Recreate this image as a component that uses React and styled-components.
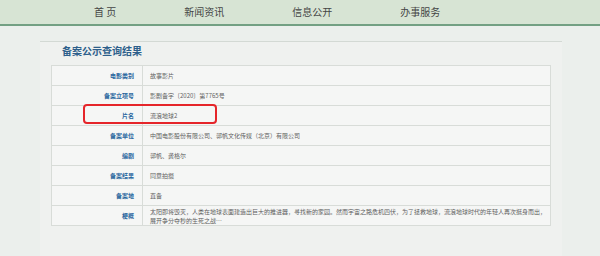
import styled, { createGlobalStyle } from "styled-components";

const GlobalStyle = createGlobalStyle`
    html, body {
        margin: 0;
        padding: 0;
        background: #eaeeeb;
        font-family: "Noto Sans CJK SC", "Noto Sans", sans-serif;
    }
`

const rows = [
    { label: "电影类别", value: "故事影片" },
    { label: "备案立项号", value: "影剧备字〔2020〕第7765号" },
    { label: "片名", value: "流浪地球2", marked: true },
    { label: "备案单位", value: "中国电影股份有限公司、郭帆文化传媒（北京）有限公司" },
    { label: "编剧", value: "郭帆、龚格尔" },
    { label: "备案结果", value: "同意拍摄" },
    { label: "备案地", value: "直备" },
    {
        label: "梗概",
        value: "太阳即将毁灭，人类在地球表面建造出巨大的推进器，寻找新的家园。然而宇宙之路危机四伏，为了拯救地球，流浪地球时代的年轻人再次挺身而出，展开争分夺秒的生死之战…",
        tall: true,
    },
];

const navItems = ["首 页", "新闻资讯", "信息公开", "办事服务"];

const App = () => {
    return (
        <Page>
            <GlobalStyle />
            <Nav>
                {navItems.map((item) => (
                    <NavItem key={item}>{item}</NavItem>
                ))}
            </Nav>
            <Main>
                <Panel>
                    <Title>备案公示查询结果</Title>
                    <Table>
                        {rows.map((row) => (
                            <Row key={row.label}>
                                <Label>{row.label}</Label>
                                <Value $tall={row.tall}>{row.value}</Value>
                                {row.marked && <Marker />}
                            </Row>
                        ))}
                    </Table>
                </Panel>
            </Main>
        </Page>
    );
}

export default App;

const Page = styled.div`
    width: 600px;
    height: 256px;
    overflow: hidden;
    background: #ebefec;
`

const Nav = styled.nav`
    height: 24px;
    display: flex;
    align-items: center;
    gap: 68px;
    padding-left: 94px;
    background: #d7e4d4;
    border-bottom: 2px solid #73a083;
`

const NavItem = styled.div`
    font-size: 10px;
    line-height: 24px;
    color: #444;
    white-space: pre;
`

const Main = styled.div`
    padding-top: 15px;
`

const Panel = styled.div`
    margin: 0 38px 0 40px;
    border-top: 1px solid #d3d9d4;
    background: #eff1ef;
    padding-bottom: 40px;
`

const Title = styled.div`
    padding: 3px 0 0 22px;
    font-size: 10px;
    line-height: 12px;
    font-weight: 700;
    color: #2d5f8b;
`

const Table = styled.div`
    margin: 8px 0 0 11px;
    width: 498px;
    border: 1px solid #d8dcd8;
    background: #f5f6f5;
`

const Row = styled.div`
    position: relative;
    display: grid;
    grid-template-columns: 91px 1fr;
    min-height: 19px;
    border-top: 1px solid #d8dcd8;

    &:first-child {
        border-top: none;
    }
`

const Label = styled.div`
    display: flex;
    align-items: center;
    justify-content: flex-end;
    padding-right: 8px;
    border-right: 1px solid #d8dcd8;
    font-size: 6px;
    font-weight: 700;
    color: #2a679f;
`

const Value = styled.div`
    display: flex;
    align-items: center;
    padding: ${(p) => (p.$tall ? "1px 0 0 7px" : "0 7px")};
    font-size: 6px;
    line-height: 9px;
    color: #5e5e5e;
`

const Marker = styled.div`
    position: absolute;
    left: 31px;
    top: -2px;
    width: 130px;
    height: 16px;
    border: 2px solid #e5252a;
    border-radius: 4px;
`
